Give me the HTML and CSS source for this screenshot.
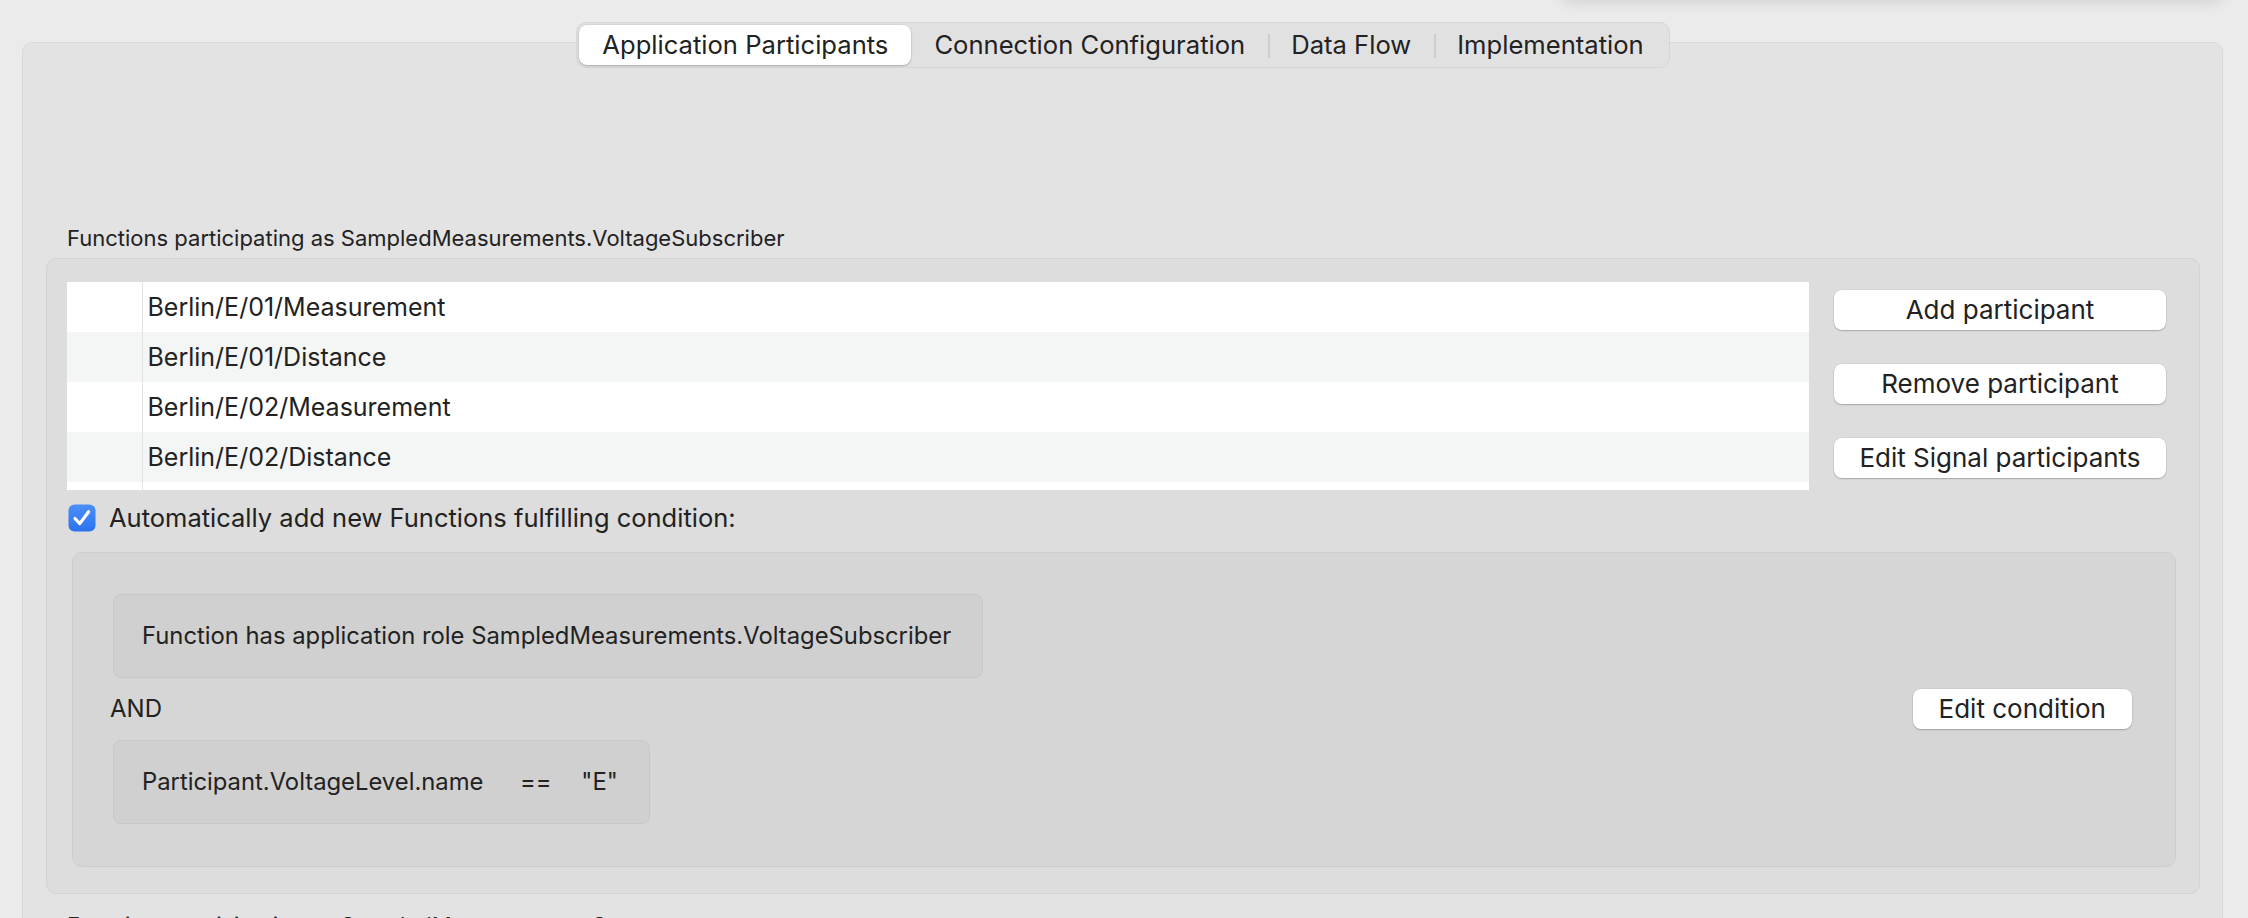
FILE: index.html
```html
<!DOCTYPE html>
<html lang="en">

<head>
    <meta charset="utf-8">
    <title>Application Participants</title>
    <meta name="viewport" content="width=device-width, initial-scale=1">
    <link rel="stylesheet" href="styles.css">
</head>

<body>

    <!-- Shadow of the popover that hangs above this window -->
    <div class="popover-shadow"></div>

    <main class="panel">
        <nav class="tabs">
            <button class="tab is-active" type="button">Application Participants</button>
            <button class="tab" type="button">Connection Configuration</button>
            <button class="tab has-divider" type="button">Data Flow</button>
            <button class="tab has-divider" type="button">Implementation</button>
        </nav>

        <section class="participants">
            <h2 class="section-title">Functions participating as SampledMeasurements.VoltageSubscriber</h2>
            <div class="group">
                <div class="participants-row">
                    <table class="participant-table">
                        <tbody>
                            <tr>
                                <td class="marker"></td>
                                <td>Berlin/E/01/Measurement</td>
                            </tr>
                            <tr>
                                <td class="marker"></td>
                                <td>Berlin/E/01/Distance</td>
                            </tr>
                            <tr>
                                <td class="marker"></td>
                                <td>Berlin/E/02/Measurement</td>
                            </tr>
                            <tr>
                                <td class="marker"></td>
                                <td>Berlin/E/02/Distance</td>
                            </tr>
                            <tr class="filler">
                                <td class="marker"></td>
                                <td></td>
                            </tr>
                        </tbody>
                    </table>
                    <div class="participant-actions">
                        <button class="push-button" type="button">Add participant</button>
                        <button class="push-button" type="button">Remove participant</button>
                        <button class="push-button" type="button">Edit Signal participants</button>
                    </div>
                </div>

                <label class="auto-add">
                    <input type="checkbox" class="visuallyhidden" checked>
                    <svg class="checkbox" width="28" height="28" viewBox="0 0 28 28" aria-hidden="true">
                        <defs>
                            <linearGradient id="check-fill" x1="0" y1="0" x2="0" y2="1">
                                <stop offset="0" stop-color="#4b8ff9" />
                                <stop offset="1" stop-color="#2c72ef" />
                            </linearGradient>
                        </defs>
                        <rect x="0.5" y="0.5" width="27" height="27" rx="6" fill="url(#check-fill)" />
                        <path d="M7 14.5 L11.8 19.6 L20.6 7.8" fill="none" stroke="#fff" stroke-width="3.2"
                            stroke-linecap="round" stroke-linejoin="round" />
                    </svg>
                    <span>Automatically add new Functions fulfilling condition:</span>
                </label>

                <div class="condition">
                    <div class="clauses">
                        <div class="clause">Function has application role SampledMeasurements.VoltageSubscriber</div>
                        <div class="clause-joiner">AND</div>
                        <div class="clause">
                            <span>Participant.VoltageLevel.name</span>
                            <span class="operator">==</span>
                            <span class="operand">"E"</span>
                        </div>
                    </div>
                    <button class="push-button edit-condition" type="button">Edit condition</button>
                </div>
            </div>
        </section>

        <section class="participants">
            <h2 class="section-title">Functions participating as SampledMeasurements.Sensor</h2>
        </section>
    </main>

</body>

</html>
```

FILE: styles.css
```css
* {
    margin: 0;
    padding: 0;
    box-sizing: border-box;
}

html,
body {
    height: 100%;
    overflow: hidden;
}

body {
    position: relative;
    font-family: "Inter", "Liberation Sans", sans-serif;
    font-size: 26px;
    color: #222;
    background-color: #ebebeb;
}

button {
    font: inherit;
    color: inherit;
    border: 0;
    background: none;
}

/** Popover shadow at the top edge **/
.popover-shadow {
    position: absolute;
    top: -60px;
    left: 1560px;
    width: 664px;
    height: 60px;
    border-radius: 12px;
    box-shadow: 0 2px 14px rgba(0, 0, 0, 0.12);
}

/** Main panel with the segmented tab bar sitting on its top edge **/
.panel {
    margin: 42px 25px 0 22px;
    padding: 0 22px 40px 23px;
    min-height: 1000px;
    background-color: #e3e3e3;
    border: 1px solid #d9d9d9;
    border-radius: 10px;
}

.tabs {
    display: flex;
    width: max-content;
    margin: -21px auto 0;
    padding: 2px;
    background-color: #e1e1e1;
    border: 1px solid #d6d6d6;
    border-radius: 10px;
}

.tab {
    position: relative;
    height: 40px;
    padding: 0 23px;
    font-size: 25.6px;
    line-height: 40px;
    border-radius: 8px;
}

.tab.is-active {
    background-color: #fff;
    box-shadow: 0 1px 2px rgba(0, 0, 0, 0.22), 0 0 0 0.5px rgba(0, 0, 0, 0.08);
}

.tab.has-divider::before {
    content: "";
    position: absolute;
    left: 0;
    top: 9px;
    height: 24px;
    border-left: 2px solid #cdcdcd;
}

/** Participant sections **/
.section-title {
    margin: 157px 0 7px 21px;
    font-size: 22px;
    font-weight: 400;
    line-height: 26px;
}

.participants + .participants .section-title {
    margin-top: 18px;
}

.group {
    padding: 23px 33px 26px 20px;
    background-color: #dddddd;
    border: 1px solid #d3d3d3;
    border-radius: 10px;
}

.participants-row {
    display: flex;
    gap: 25px;
}

.participant-table {
    flex: 1;
    border-collapse: collapse;
    background-color: #fff;
    font-size: 25px;
}

.participant-table td {
    height: 50px;
    padding: 0 5px;
    line-height: 50px;
}

.participant-table tr:nth-child(even) td {
    background-color: #f4f5f5;
}

.participant-table .marker {
    width: 75px;
    border-right: 1px solid #e2e2e2;
}

.participant-table .filler td {
    height: 8px;
    line-height: 8px;
    background-color: #fff;
}

.participant-actions {
    display: flex;
    flex-direction: column;
    gap: 34px;
    width: 332px;
    padding-top: 8px;
}

.push-button {
    height: 40px;
    line-height: 40px;
    text-align: center;
    background-color: #fff;
    border-radius: 8px;
    box-shadow: 0 1px 1.5px rgba(0, 0, 0, 0.22), 0 0 0 0.5px rgba(0, 0, 0, 0.07);
}

/** Auto add checkbox **/
.auto-add {
    display: flex;
    align-items: center;
    gap: 13px;
    margin: 14px 0 0 1px;
    font-size: 25.5px;
    line-height: 28px;
}

.checkbox {
    display: block;
    flex: none;
}

/** Condition editor **/
.condition {
    display: flex;
    align-items: center;
    justify-content: space-between;
    margin: 20px -10px 0 5px;
    padding: 41px 43px 42px 40px;
    background-color: #d6d6d6;
    border: 1px solid #cdcdcd;
    border-radius: 10px;
}

.clauses {
    display: flex;
    flex-direction: column;
    align-items: flex-start;
}

.clause {
    padding: 27px 31px 27px 28px;
    font-size: 23.8px;
    line-height: 28px;
    background-color: #d0d0d0;
    border: 1px solid #c8c8c8;
    border-radius: 8px;
}

.clause .operator {
    margin-left: 30px;
}

.clause .operand {
    margin-left: 23px;
}

.clause-joiner {
    margin: 20px 0 20px -3px;
    font-size: 24px;
    line-height: 22px;
}

.edit-condition {
    padding: 0 26px;
}

/** Visually hidden for checkboxes **/
.visuallyhidden {
    position: absolute;
    overflow: hidden;
    clip: rect(1px, 1px, 1px, 1px);
    width: 1px;
    height: 1px;
    white-space: nowrap;
}
```
